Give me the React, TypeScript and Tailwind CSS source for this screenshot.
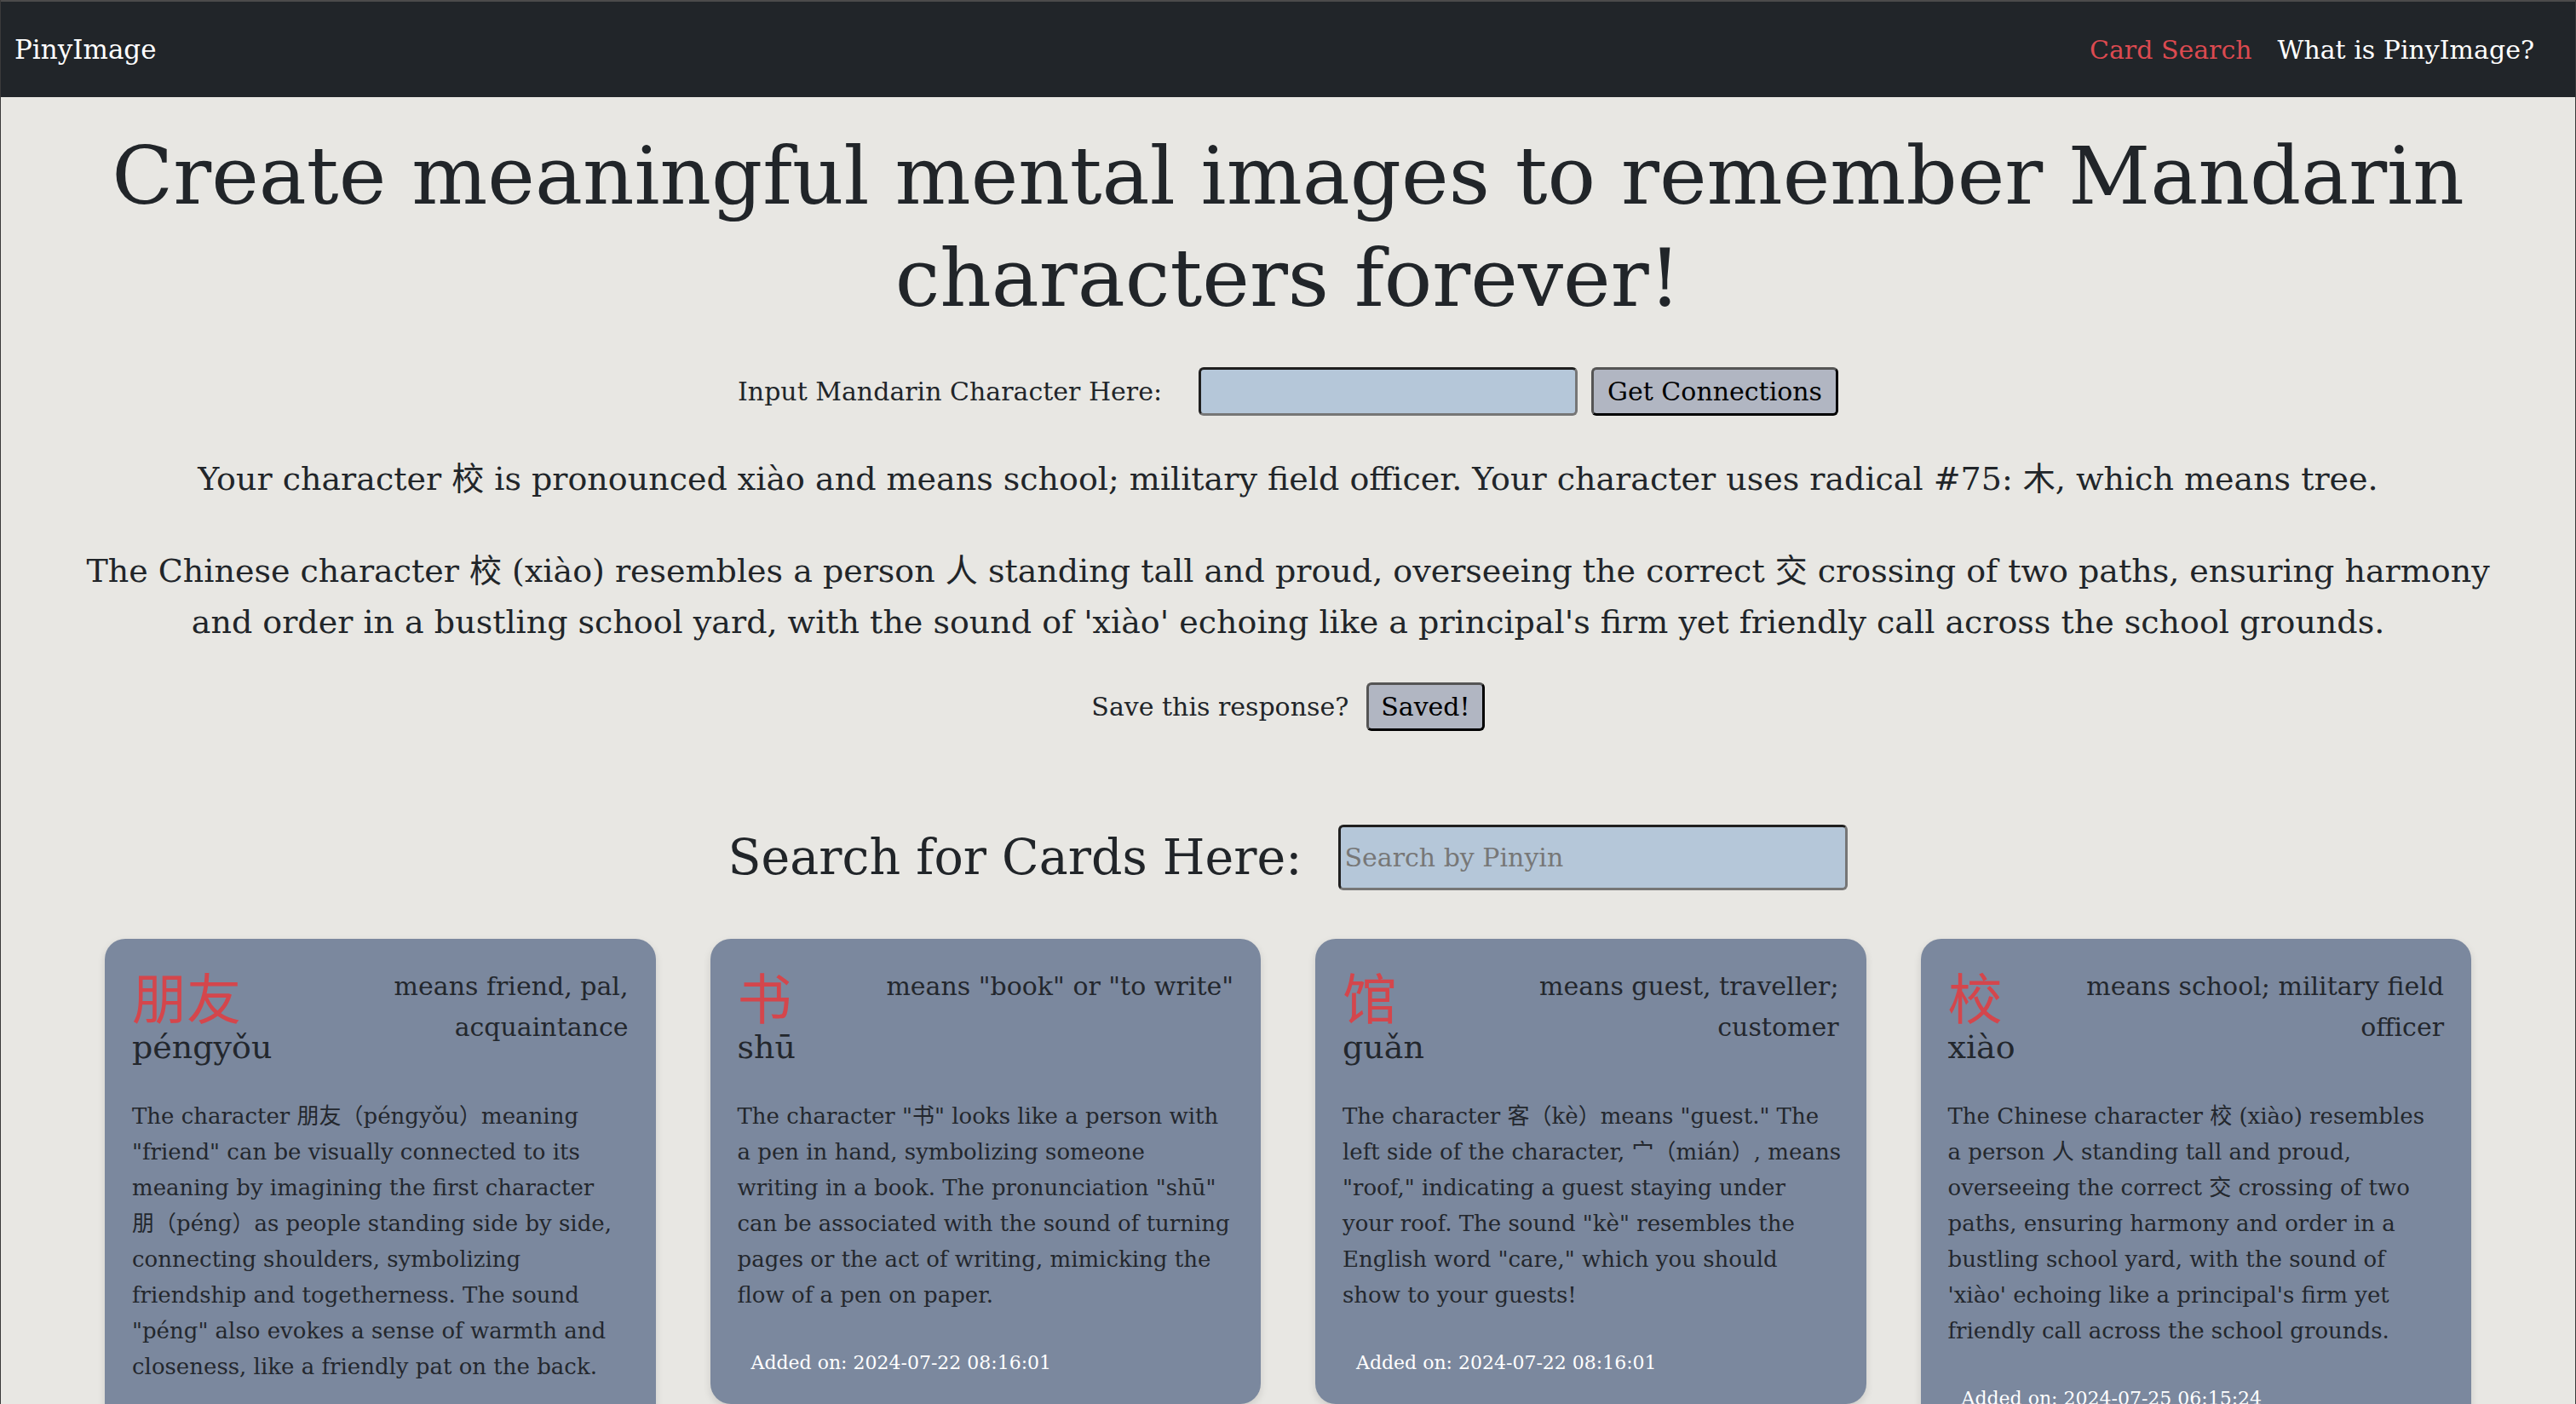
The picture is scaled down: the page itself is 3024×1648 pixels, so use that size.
const serif = "font-['DejaVu_Serif','Noto_Sans_CJK_SC',serif]";

type Card = {
  hanzi: string;
  pinyin: string;
  meaning: string[];
  lines: string[];
  added: string;
};

const cards: Card[] = [
  {
    hanzi: '朋友',
    pinyin: 'péngyǒu',
    meaning: ['means friend, pal,', 'acquaintance'],
    lines: [
      'The character 朋友（péngyǒu）meaning',
      '"friend" can be visually connected to its',
      'meaning by imagining the first character',
      '朋（péng）as people standing side by side,',
      'connecting shoulders, symbolizing',
      'friendship and togetherness. The sound',
      '"péng" also evokes a sense of warmth and',
      'closeness, like a friendly pat on the back.',
    ],
    added: '2024-07-22 08:16:01',
  },
  {
    hanzi: '书',
    pinyin: 'shū',
    meaning: ['means "book" or "to write"'],
    lines: [
      'The character "书" looks like a person with',
      'a pen in hand, symbolizing someone',
      'writing in a book. The pronunciation "shū"',
      'can be associated with the sound of turning',
      'pages or the act of writing, mimicking the',
      'flow of a pen on paper.',
    ],
    added: '2024-07-22 08:16:01',
  },
  {
    hanzi: '馆',
    pinyin: 'guǎn',
    meaning: ['means guest, traveller;', 'customer'],
    lines: [
      'The character 客（kè）means "guest." The',
      'left side of the character, 宀（mián）, means',
      '"roof," indicating a guest staying under',
      'your roof. The sound "kè" resembles the',
      'English word "care," which you should',
      'show to your guests!',
    ],
    added: '2024-07-22 08:16:01',
  },
  {
    hanzi: '校',
    pinyin: 'xiào',
    meaning: ['means school; military field', 'officer'],
    lines: [
      'The Chinese character 校 (xiào) resembles',
      'a person 人 standing tall and proud,',
      'overseeing the correct 交 crossing of two',
      'paths, ensuring harmony and order in a',
      'bustling school yard, with the sound of',
      "'xiào' echoing like a principal's firm yet",
      'friendly call across the school grounds.',
    ],
    added: '2024-07-25 06:15:24',
  },
];

function CharCard({ card }: { card: Card }) {
  return (
    <div className="rounded-[24px] bg-[#7b889e] p-[32px] shadow-[0_4px_10px_rgba(0,0,0,0.12)] text-[#23272d]">
      <div className="flex items-start justify-between gap-4">
        <div className="shrink-0">
          <div className="font-['Noto_Sans_CJK_SC',sans-serif] text-[64px] leading-[68px] text-[#d4464c]">
            {card.hanzi}
          </div>
          <div className="mt-[3px] text-[38px] leading-[48px]">{card.pinyin}</div>
        </div>
        <div className="text-right text-[30px] leading-[48px]">
          {card.meaning.map((m) => (
            <span key={m} className="block whitespace-nowrap">
              {m}
            </span>
          ))}
        </div>
      </div>
      <p className="mt-[36px] text-[26px] leading-[42px]">
        {card.lines.map((l) => (
          <span key={l} className="block whitespace-nowrap">
            {l}
          </span>
        ))}
      </p>
      <div className="mt-[43px] pl-[16px] text-[22px] leading-[32px] text-white">
        Added on: {card.added}
      </div>
    </div>
  );
}

export default function App() {
  return (
    <div className={`min-h-screen overflow-hidden bg-[#e8e7e3] border-x border-[#3a3a3a] text-[#212529] ${serif}`}>
      <nav className="flex h-[114px] items-center justify-between border-t-2 border-[#4b4b4b] bg-[#212529] pl-[16px] pr-[48px]">
        <span className="text-[31px] text-white">PinyImage</span>
        <div className="flex items-center gap-[30px] text-[30px]">
          <span className="text-[#dc4a50]">Card Search</span>
          <span className="text-white">What is PinyImage?</span>
        </div>
      </nav>

      <h1 className="mt-[33px] text-center text-[94px] leading-[120px]">
        Create meaningful mental images to remember Mandarin
        <br />
        characters forever!
      </h1>

      <div className="mt-[44px] flex items-center justify-center text-[30px]">
        <label className="mr-[43px]">Input Mandarin Character Here:</label>
        <input
          className="h-[57px] w-[445px] rounded-[6px] border-[3px] border-t-[#1f1f1f] border-l-[#1f1f1f] border-b-[#767676] border-r-[#767676] bg-[#b5c7d9] px-2 outline-none"
          type="text"
        />
        <button className="ml-[16px] h-[57px] rounded-[6px] border-[3px] border-t-[#555] border-l-[#555] border-b-black border-r-black bg-[#b1b6c2] px-[16px] text-black">
          Get Connections
        </button>
      </div>

      <p className="mt-[47px] whitespace-nowrap text-center text-[38px] leading-[54px]">
        Your character 校 is pronounced xiào and means school; military field officer. Your character uses radical #75: 木, which means tree.
      </p>

      <p className="mt-[51px] text-center text-[38px] leading-[60px]">
        The Chinese character 校 (xiào) resembles a person 人 standing tall and proud, overseeing the correct 交 crossing of two paths, ensuring harmony
        <br />
        and order in a bustling school yard, with the sound of 'xiào' echoing like a principal's firm yet friendly call across the school grounds.
      </p>

      <div className="mt-[41px] flex items-center justify-center text-[30px]">
        <span className="mr-[21px]">Save this response?</span>
        <button className="h-[57px] rounded-[6px] border-[3px] border-t-[#555] border-l-[#555] border-b-black border-r-black bg-[#b1b6c2] px-[14px] text-black">
          Saved!
        </button>
      </div>

      <div className="mt-[110px] flex items-center justify-center">
        <h2 className="mr-[43px] text-[57px] leading-[77px]">Search for Cards Here:</h2>
        <input
          className="h-[77px] w-[598px] rounded-[6px] border-[3px] border-t-[#1f1f1f] border-l-[#1f1f1f] border-b-[#767676] border-r-[#767676] bg-[#b5c7d9] px-[4px] text-[30px] outline-none placeholder:text-[#777]"
          type="text"
          placeholder="Search by Pinyin"
        />
      </div>

      <div className="mt-[57px] grid grid-cols-4 items-start gap-[64px] px-[122px]">
        {cards.map((c) => (
          <CharCard key={c.hanzi} card={c} />
        ))}
      </div>
    </div>
  );
}
